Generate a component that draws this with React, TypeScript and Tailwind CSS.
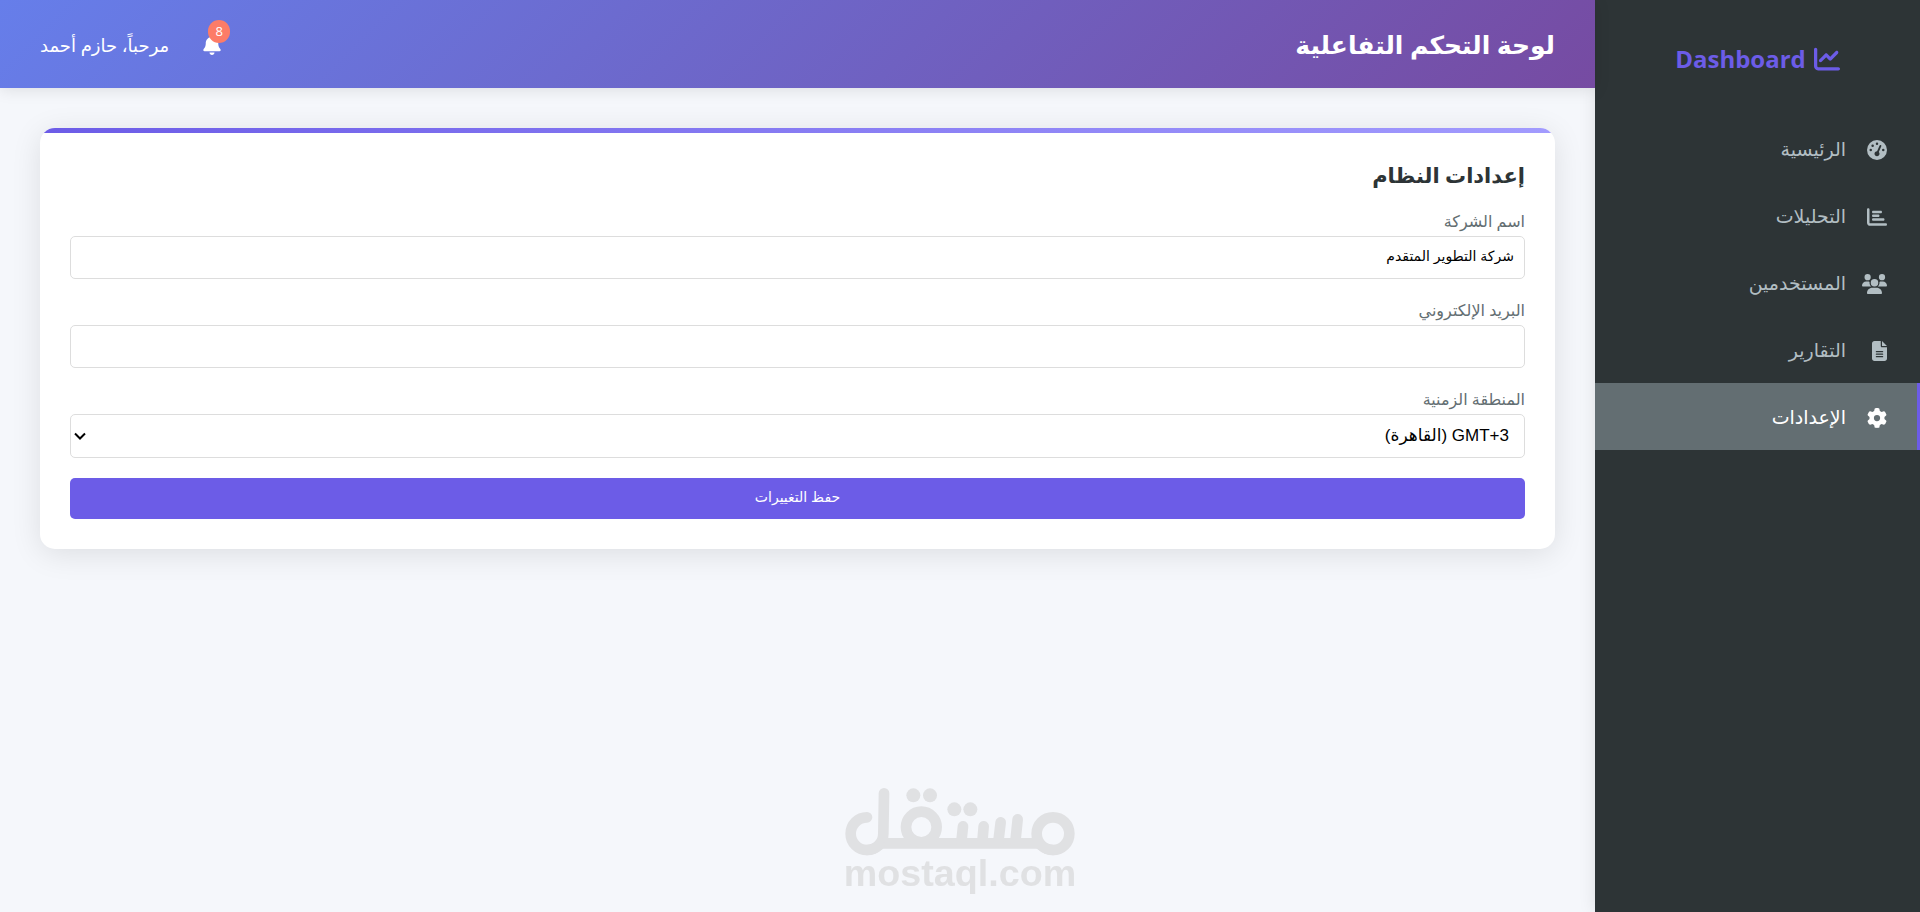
import { FaBell, FaChartBar, FaChartLine, FaFileLines, FaGaugeHigh, FaGear, FaUsers } from "react-icons/fa6"

const navItems = [
    { label: "الرئيسية", icon: FaGaugeHigh, iconClass: "h-5 w-5", active: false },
    { label: "التحليلات", icon: FaChartBar, iconClass: "h-5 w-5", active: false },
    { label: "المستخدمين", icon: FaUsers, iconClass: "h-5 w-[25px]", active: false },
    { label: "التقارير", icon: FaFileLines, iconClass: "h-5 w-[15px]", active: false },
    { label: "الإعدادات", icon: FaGear, iconClass: "h-5 w-5", active: true },
]

const Sidebar = () => {
    return (
        <aside className="w-[325px] shrink-0 bg-[#2d3436] shadow-[0_0_16px_rgba(0,0,0,0.1)]">
            <div className="flex h-[115px] items-center justify-center gap-2 pt-0.5 text-[#6c5ce7]">
                <FaChartLine size={26} />
                <span className="text-2xl font-bold">Dashboard</span>
            </div>
            <nav>
                {navItems.map(({ label, icon: Icon, iconClass, active }) => (
                    <a
                        key={label}
                        href="#"
                        className={
                            active
                                ? "flex h-[67px] items-center gap-4 border-r-[3px] border-[#6c5ce7] bg-[#636e72] px-[30px] pt-0.5 text-[19px] text-white"
                                : "flex h-[67px] items-center gap-4 border-r-[3px] border-transparent px-[30px] pt-0.5 text-[19px] text-[#b2bec3]"
                        }
                    >
                        <span className="flex w-[25px] shrink-0">
                            <Icon className={iconClass} />
                        </span>
                        <span>{label}</span>
                    </a>
                ))}
            </nav>
        </aside>
    )
}

const Header = () => {
    return (
        <header className="flex h-[88px] items-center justify-between bg-[linear-gradient(135deg,#667eea_0%,#764ba2_100%)] px-10 pt-0.5 text-white shadow-[0_2px_15px_rgba(0,0,0,0.1)]">
            <h1 className="text-[25px] font-bold">لوحة التحكم التفاعلية</h1>
            <div className="flex items-center gap-[34px]">
                <button type="button" aria-label="الإشعارات" className="relative">
                    <FaBell className="h-5 w-[18px]" />
                    <span className="absolute -top-[15px] -right-[9px] flex h-[23px] w-[22px] items-center justify-center rounded-full bg-[#fd7c67] text-[13px]">
                        8
                    </span>
                </button>
                <span className="text-lg">مرحباً، حازم أحمد</span>
            </div>
        </header>
    )
}

const SettingsCard = () => {
    return (
        <section className="relative overflow-hidden rounded-[15px] bg-white p-[30px] shadow-[0_5px_30px_rgba(0,0,0,0.1)]">
            <div className="absolute inset-x-0 top-0 h-[5px] bg-[linear-gradient(90deg,#6c5ce7,#a29bfe)]" />
            <h2 className="mb-4 pb-0.5 text-[21px] leading-[34px] font-semibold text-[#2d3436]">إعدادات النظام</h2>
            <form>
                <div className="mb-5">
                    <label htmlFor="company" className="block pb-1 text-base leading-[22px] text-[#636e72]">اسم الشركة</label>
                    <input
                        id="company"
                        type="text"
                        defaultValue="شركة التطوير المتقدم"
                        className="block h-[43px] w-full rounded-[5px] border border-[#ddd] bg-white px-2.5 pb-1 font-['Liberation_Sans','DejaVu_Sans',sans-serif] text-sm text-black"
                    />
                </div>
                <div className="mb-5">
                    <label htmlFor="email" className="block pb-1 text-base leading-[22px] text-[#636e72]">البريد الإلكتروني</label>
                    <input
                        id="email"
                        type="email"
                        className="block h-[43px] w-full rounded-[5px] border border-[#ddd] bg-white px-2.5 pb-1 font-['Liberation_Sans','DejaVu_Sans',sans-serif] text-sm text-black"
                    />
                </div>
                <div className="mb-5">
                    <label htmlFor="timezone" className="block pb-1 text-base leading-[22px] text-[#636e72]">المنطقة الزمنية</label>
                    <div className="relative">
                        <select
                            id="timezone"
                            className="block h-11 w-full appearance-none rounded-[5px] border border-[#ddd] bg-white px-[15px] font-['Liberation_Sans','DejaVu_Sans',sans-serif] text-[17px] text-black"
                        >
                            <option>GMT+3 (القاهرة)</option>
                        </select>
                        <svg
                            className="pointer-events-none absolute top-[18px] left-1 h-2 w-3"
                            viewBox="0 0 12 8"
                            fill="none"
                            stroke="black"
                            strokeWidth="2"
                        >
                            <path d="M1 1.5L6 6.5L11 1.5" />
                        </svg>
                    </div>
                </div>
                <button
                    type="button"
                    className="block h-[41px] w-full rounded-[5px] bg-[#6c5ce7] pb-1 font-['Liberation_Sans','DejaVu_Sans',sans-serif] text-sm text-white"
                >
                    حفظ التغييرات
                </button>
            </form>
        </section>
    )
}

const Watermark = () => {
    return (
        <div className="pointer-events-none fixed inset-x-0 bottom-0 flex justify-center">
            <svg width="280" height="142" viewBox="0 0 840 426" direction="ltr" aria-hidden="true">
                <g fill="none" stroke="#e0e1e3" strokeWidth="32" strokeLinecap="round">
                    <path d="M141 142A49 49 0 1 0 190 191L192 70" />
                    <path d="M190 220H655" />
                    <path d="M141 240Q160 240 178 225M699 240Q680 240 662 225" />
                    <circle cx="699" cy="191" r="49" />
                    <circle cx="304" cy="171" r="46" />
                    <path d="M429 169L424 216M491 169L487 216M542 157L535 216M593 148L586 216" />
                </g>
                <g fill="#e0e1e3">
                    <circle cx="280" cy="76" r="21" />
                    <circle cx="330" cy="76" r="21" />
                    <circle cx="403" cy="118" r="21" />
                    <circle cx="451" cy="118" r="21" />
                    <text x="420" y="348" textAnchor="middle" fontSize="113" className="font-['Liberation_Sans',sans-serif] font-bold">
                        mostaql.com
                    </text>
                </g>
            </svg>
        </div>
    )
}

const App = () => {
    return (
        <div dir="rtl" className="flex min-h-screen bg-[#f5f7fb] font-['Open_Sans','Noto_Sans','DejaVu_Sans',sans-serif]">
            <Sidebar />
            <div className="min-w-0 flex-1">
                <Header />
                <main className="p-10">
                    <SettingsCard />
                </main>
            </div>
            <Watermark />
        </div>
    )
}

export default App
